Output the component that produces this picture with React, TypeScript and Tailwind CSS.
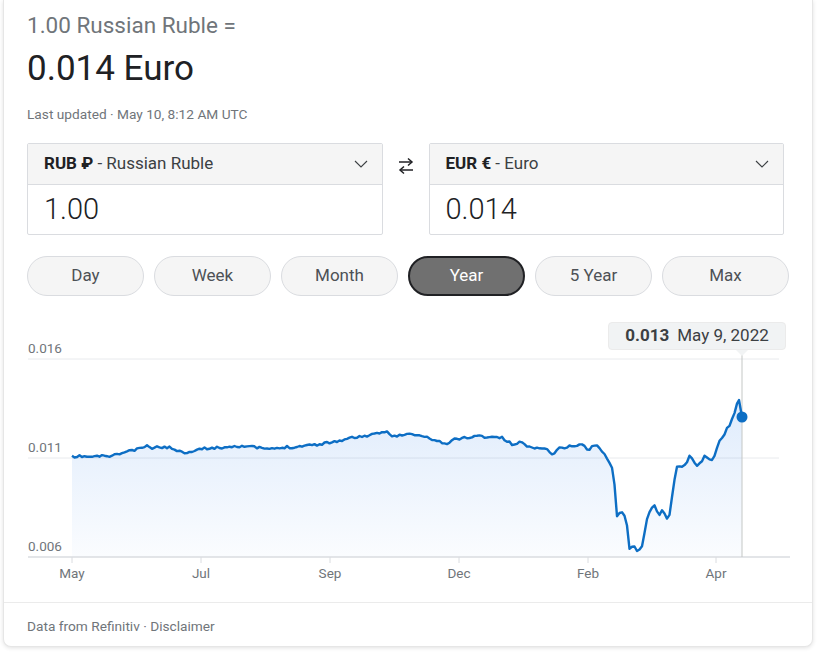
import React from 'react';

const LINE = '#0d6ec4';

// rough shape of the RUB/EUR year, in page coordinates
const keys: [number, number][] = [
  [71, 458], [75, 459], [79, 457], [90, 458], [100, 457], [111, 457], [118, 455], [127, 452],
  [135, 451], [140, 449], [145, 447], [150, 449], [158, 448], [165, 448], [174, 450], [182, 454],
  [190, 452], [200, 450], [208, 449], [215, 449], [225, 448], [235, 447], [243, 447], [250, 448],
  [260, 449], [268, 450], [274, 450], [285, 448], [295, 448], [305, 446], [311, 446], [320, 445],
  [330, 443], [338, 442], [345, 440], [355, 438], [364, 437], [372, 436], [380, 434], [385, 432],
  [390, 436], [395, 437], [402, 436], [410, 435], [414, 436], [420, 437], [428, 439], [433, 441],
  [440, 443], [446, 446], [450, 442], [454, 440], [462, 439], [470, 438], [478, 437], [486, 438],
  [495, 438], [501, 439], [506, 442], [512, 446], [518, 444], [522, 442], [525, 446], [530, 449],
  [533, 450], [538, 448], [545, 450], [551, 455], [555, 452], [559, 449], [565, 448], [572, 447],
  [580, 445], [584, 448], [588, 451], [592, 447], [595, 446], [600, 450], [604, 457], [608, 462],
  [612, 470], [614, 490], [616, 518], [619, 514], [622, 512], [625, 520], [627, 535], [629, 554],
  [631, 547], [633, 546], [635, 553], [638, 551], [641, 548], [643, 538], [646, 520], [650, 508],
  [654, 506], [657, 514], [660, 516], [662, 507], [665, 520], [668, 519], [670, 505], [672, 490],
  [675, 470], [678, 466], [681, 469], [684, 466], [687, 460], [689, 455], [692, 460], [696, 468],
  [700, 464], [704, 457], [708, 460], [711, 461], [714, 456], [717, 446], [720, 439], [724, 436],
  [726, 430], [728, 427], [732, 418], [736, 405], [738, 401], [741, 418],
];

let seed = 11;
const rnd = () => {
  seed = (seed * 16807) % 2147483647;
  return seed / 2147483647;
};

const interp = (x: number) => {
  for (let i = 0; i < keys.length - 1; i++) {
    const [x0, y0] = keys[i];
    const [x1, y1] = keys[i + 1];
    if (x >= x0 && x <= x1) return y0 + ((y1 - y0) * (x - x0)) / (x1 - x0);
  }
  return keys[keys.length - 1][1];
};

const pts: [number, number][] = [];
for (let x = 71; x < 738; x += 2.5) {
  pts.push([x, interp(x) + (rnd() - 0.5) * 2.4]);
}
pts.push([738, 401]);
pts.push([741, 418]);

const linePath = pts.map(([x, y], i) => `${i ? 'L' : 'M'}${x.toFixed(1)} ${y.toFixed(1)}`).join(' ');
const areaPath = `${linePath} L741 558 L71 558 Z`;

const months = [
  ['May', 71],
  ['Jul', 200],
  ['Sep', 329],
  ['Dec', 458],
  ['Feb', 587],
  ['Apr', 715],
] as const;

const ranges = ['Day', 'Week', 'Month', 'Year', '5 Year', 'Max'];

function Chevron() {
  return (
    <svg width="14" height="8" viewBox="0 0 14 8" className="shrink-0">
      <polyline points="1,1 7,7 13,1" fill="none" stroke="#3c4043" strokeWidth="1.1" />
    </svg>
  );
}

function CurrencyBox({ code, name, value }: { code: string; name: string; value: string }) {
  return (
    <div className="border border-[#dadce0] rounded-[2px] flex flex-col">
      <div className="h-[41px] bg-[#f5f5f5] border-b border-[#dadce0] flex items-center justify-between pl-4 pr-[14px]">
        <span className="text-[17px] text-[#3c4043]">
          <span className="font-bold text-[#202124]">{code}</span> - {name}
        </span>
        <Chevron />
      </div>
      <div className="h-[49px] flex items-center pl-4 text-[29px] font-light text-[#202124]">{value}</div>
    </div>
  );
}

export default function App() {
  return (
    <div className="w-[823px] h-[663px] bg-white overflow-hidden font-['Roboto',sans-serif]">
      <div className="ml-[3px] w-[810px] bg-white border border-t-0 border-[#e6e6e6] rounded-b-lg shadow-[0_1px_4px_rgba(0,0,0,0.12)] flex flex-col">
        <div className="pl-[23px] pr-[23px]">
          <div className="pt-[11px] text-[22.5px] leading-[28px] text-[#70757a]">1.00 Russian Ruble =</div>
          <div className="mt-[10px] text-[35px] leading-[40px] text-[#202124]">0.014 Euro</div>
          <div className="mt-[15px] text-[13.7px] leading-[20px] text-[#70757a]">Last updated · May 10, 8:12 AM UTC</div>

          <div className="mt-[19px] mr-[5px] grid grid-cols-[1fr_46px_1fr]">
            <CurrencyBox code="RUB ₽" name="Russian Ruble" value="1.00" />
            <div className="flex justify-center pt-[14px]">
              <svg width="16" height="18" viewBox="0 0 16 18">
                <g fill="none" stroke="#202124" strokeWidth="1.5">
                  <line x1="1" y1="5" x2="14" y2="5" />
                  <polyline points="10,1.5 14,5 10,8.5" />
                  <line x1="2" y1="13" x2="15" y2="13" />
                  <polyline points="6,9.5 2,13 6,16.5" />
                </g>
              </svg>
            </div>
            <CurrencyBox code="EUR €" name="Euro" value="0.014" />
          </div>

          <div className="mt-[21px] flex gap-[10px]">
            {ranges.map((r) =>
              r === 'Year' ? (
                <div
                  key={r}
                  className="w-[117px] shrink-0 h-10 rounded-full bg-[#707070] border-2 border-[#202124] flex items-center justify-center text-[17px] text-white"
                >
                  {r}
                </div>
              ) : (
                <div
                  key={r}
                  className={`${r === 'Max' ? 'flex-1' : 'w-[117px] shrink-0'} h-10 rounded-full bg-[#f5f5f5] border border-[#dadce0] flex items-center justify-center text-[17px] text-[#4d5156]`}
                >
                  {r}
                </div>
              )
            )}
          </div>
        </div>

        <div className="relative h-[306px]">
          <svg width="810" height="306" viewBox="3 297 810 306" className="block">
            <defs>
              <linearGradient id="fill" x1="0" y1="0" x2="0" y2="1">
                <stop offset="0%" stopColor="#1a73e8" stopOpacity="0.14" />
                <stop offset="100%" stopColor="#1a73e8" stopOpacity="0.02" />
              </linearGradient>
            </defs>
            <line x1="27" y1="360" x2="778" y2="360" stroke="#e8eaed" />
            <line x1="27" y1="459" x2="778" y2="459" stroke="#e8eaed" />
            <g fill="#70757a" fontSize="13.5" fontFamily="Roboto, sans-serif">
              <text x="27" y="354">0.016</text>
              <text x="27" y="453">0.011</text>
              <text x="27" y="552">0.006</text>
            </g>
            <path d={areaPath} fill="url(#fill)" />
            <line x1="27" y1="558" x2="789" y2="558" stroke="#dadce0" strokeWidth="1.5" />
            {months.map(([m, x]) => (
              <g key={m}>
                <line x1={x} y1="558" x2={x} y2="564" stroke="#dadce0" />
                <text x={x} y="579" textAnchor="middle" fill="#70757a" fontSize="13.5" fontFamily="Roboto, sans-serif">
                  {m}
                </text>
              </g>
            ))}
            <line x1="741" y1="355" x2="741" y2="558" stroke="#c4c7c5" />
            <polygon points="735,351 747,351 741,357" fill="#f1f3f4" />
            <path d={linePath} fill="none" stroke={LINE} strokeWidth="2.4" strokeLinejoin="round" />
            <circle cx="741" cy="418" r="5.5" fill={LINE} />
          </svg>
          <div className="absolute left-[604px] top-[26px] w-[178px] h-[28px] rounded bg-[#f1f3f4] border border-[#ebebeb] flex items-center justify-center gap-[8px] text-[17px] text-[#3c4043]">
            <span className="font-bold">0.013</span>
            <span>May 9, 2022</span>
          </div>
        </div>

        <div className="h-[44px] border-t border-[#ebebeb] flex items-center pl-[23px] pt-[4px] text-[13.7px] text-[#70757a]">
          Data from Refinitiv · Disclaimer
        </div>
      </div>
    </div>
  );
}
